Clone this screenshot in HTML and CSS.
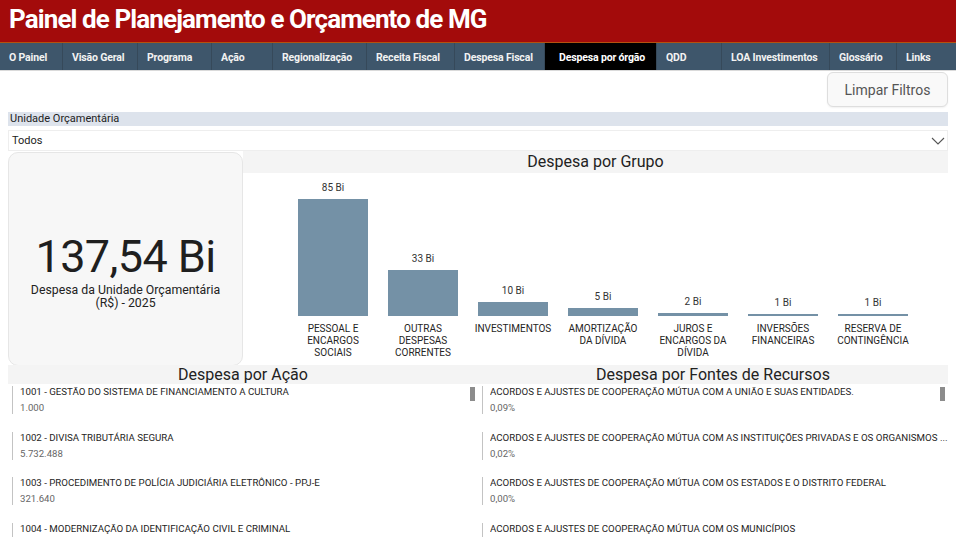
FILE: index.html
```html
<!DOCTYPE html>
<html lang="pt-BR">
<head>
<meta charset="utf-8">
<title>Painel de Planejamento e Orçamento de MG</title>
<link rel="stylesheet" href="styles.css">
</head>
<body>
<header class="topbar">
  <h1 class="title">Painel de Planejamento e Orçamento de MG</h1>
</header>
<nav class="nav">
  <a class="tab w63">O Painel</a>
  <a class="tab w75">Visão Geral</a>
  <a class="tab w74">Programa</a>
  <a class="tab w61">Ação</a>
  <a class="tab w94">Regionalização</a>
  <a class="tab w88">Receita Fiscal</a>
  <a class="tab w90">Despesa Fiscal</a>
  <a class="tab w112 active">Despesa por órgão</a>
  <a class="tab w65">QDD</a>
  <a class="tab w108">LOA Investimentos</a>
  <a class="tab w67">Glossário</a>
  <a class="tab w59 last">Links</a>
</nav>
<main class="main">
  <div class="toolbar">
    <button class="clear-btn">Limpar Filtros</button>
  </div>
  <section class="slicer">
    <div class="slicer-head">Unidade Orçamentária</div>
    <div class="slicer-box">
      <span>Todos</span>
      <svg class="chev" width="14" height="8" viewBox="0 0 14 8"><path d="M1 1 L7 7 L13 1" fill="none" stroke="#555" stroke-width="1.1"/></svg>
    </div>
  </section>
  <section class="row-top">
    <div class="card">
      <div class="card-value">137,54 Bi</div>
      <div class="card-label">Despesa da Unidade Orçamentária<br>(R$) - 2025</div>
    </div>
    <div class="chart">
      <div class="panel-title">Despesa por Grupo</div>
      <div class="plot">
        <div class="col"><div class="bar-area"><span class="val">85 Bi</span><div class="bar" style="height:117px"></div></div><div class="cat">PESSOAL E<br>ENCARGOS<br>SOCIAIS</div></div>
        <div class="col"><div class="bar-area"><span class="val">33 Bi</span><div class="bar" style="height:46px"></div></div><div class="cat">OUTRAS<br>DESPESAS<br>CORRENTES</div></div>
        <div class="col"><div class="bar-area"><span class="val">10 Bi</span><div class="bar" style="height:14px"></div></div><div class="cat">INVESTIMENTOS</div></div>
        <div class="col"><div class="bar-area"><span class="val">5 Bi</span><div class="bar" style="height:8px"></div></div><div class="cat">AMORTIZAÇÃO<br>DA DÍVIDA</div></div>
        <div class="col"><div class="bar-area"><span class="val">2 Bi</span><div class="bar" style="height:3px"></div></div><div class="cat">JUROS E<br>ENCARGOS DA<br>DÍVIDA</div></div>
        <div class="col"><div class="bar-area"><span class="val">1 Bi</span><div class="bar" style="height:2px"></div></div><div class="cat">INVERSÕES<br>FINANCEIRAS</div></div>
        <div class="col"><div class="bar-area"><span class="val">1 Bi</span><div class="bar" style="height:2px"></div></div><div class="cat">RESERVA DE<br>CONTINGÊNCIA</div></div>
      </div>
    </div>
  </section>
  <section class="row-bottom">
    <div class="list-panel">
      <div class="panel-title small">Despesa por Ação</div>
      <div class="list">
        <div class="item"><div class="item-title">1001 - GESTÃO DO SISTEMA DE FINANCIAMENTO A CULTURA</div><div class="item-val">1.000</div></div>
        <div class="item"><div class="item-title">1002 - DIVISA TRIBUTÁRIA SEGURA</div><div class="item-val">5.732.488</div></div>
        <div class="item"><div class="item-title">1003 - PROCEDIMENTO DE POLÍCIA JUDICIÁRIA ELETRÔNICO - PPJ-E</div><div class="item-val">321.640</div></div>
        <div class="item"><div class="item-title">1004 - MODERNIZAÇÃO DA IDENTIFICAÇÃO CIVIL E CRIMINAL</div><div class="item-val">&nbsp;</div></div>
        <div class="thumb"></div>
      </div>
    </div>
    <div class="list-panel">
      <div class="panel-title small">Despesa por Fontes de Recursos</div>
      <div class="list">
        <div class="item"><div class="item-title">ACORDOS E AJUSTES DE COOPERAÇÃO MÚTUA COM A UNIÃO E SUAS ENTIDADES.</div><div class="item-val">0,09%</div></div>
        <div class="item"><div class="item-title">ACORDOS E AJUSTES DE COOPERAÇÃO MÚTUA COM AS INSTITUIÇÕES PRIVADAS E OS ORGANISMOS ...</div><div class="item-val">0,02%</div></div>
        <div class="item"><div class="item-title">ACORDOS E AJUSTES DE COOPERAÇÃO MÚTUA COM OS ESTADOS E O DISTRITO FEDERAL</div><div class="item-val">0,00%</div></div>
        <div class="item"><div class="item-title">ACORDOS E AJUSTES DE COOPERAÇÃO MÚTUA COM OS MUNICÍPIOS</div><div class="item-val">&nbsp;</div></div>
        <div class="thumb"></div>
      </div>
    </div>
  </section>
</main>
</body>
</html>
```

FILE: styles.css
```css
* { box-sizing: border-box; }
html, body { margin: 0; padding: 0; }
body {
  width: 956px;
  height: 539px;
  overflow: hidden;
  background: #ffffff;
  font-family: Roboto, "Liberation Sans", sans-serif;
  color: #252423;
}

.topbar {
  height: 43px;
  background: #a30b0b;
  border-bottom: 1px solid #b4520f;
  display: flex;
  align-items: center;
  padding-left: 9px;
}
.title {
  margin: 0;
  font-size: 26px;
  font-weight: 700;
  letter-spacing: -0.9px;
  color: #ffffff;
  line-height: 1;
  padding-bottom: 4px;
}

.nav {
  display: flex;
  height: 28px;
  background: #3e566b;
  border-bottom: 1px solid #dadada;
}
.tab {
  display: flex;
  align-items: center;
  padding-left: 9px;
  padding-top: 1px;
  font-size: 10.5px;
  font-weight: 700;
  color: #f2f2f2;
  letter-spacing: -0.15px;
  border-right: 1px solid #36495a;
  white-space: nowrap;
}
.tab.last { border-right: none; }
.tab.active {
  background: #000000;
  color: #ffffff;
  padding-left: 14px;
}
.w59 { width: 59px; } .w61 { width: 61px; } .w63 { width: 63px; }
.w65 { width: 65px; } .w67 { width: 67px; } .w74 { width: 74px; }
.w75 { width: 75px; } .w88 { width: 88px; } .w90 { width: 90px; }
.w94 { width: 94px; } .w108 { width: 108px; } .w112 { width: 112px; }

.main { padding: 0 8px; }

.toolbar {
  display: flex;
  justify-content: flex-end;
  padding-top: 1px;
  height: 41px;
}
.clear-btn {
  width: 121px;
  height: 35px;
  border: 1px solid #dedede;
  border-radius: 6px;
  background: #f9f9f9;
  font-family: Roboto, "Liberation Sans", sans-serif;
  font-size: 14px;
  color: #555555;
  padding: 0;
  box-shadow: 0 1px 2px rgba(0,0,0,0.06);
}

.slicer-head {
  height: 14px;
  background: #dde3ec;
  font-size: 11px;
  line-height: 14px;
  padding-left: 2px;
  color: #222;
}
.slicer-box {
  margin-top: 4px;
  height: 21px;
  border: 1px solid #eeeeee;
  display: flex;
  align-items: center;
  justify-content: space-between;
  padding: 0 2px 0 3px;
  font-size: 11px;
  color: #222;
}

.row-top {
  display: flex;
  height: 214px;
}
.card {
  width: 235px;
  height: 214px;
  margin-top: 1px;
  border: 1px solid #e6e6e6;
  border-radius: 10px;
  background: #f7f7f7;
  display: flex;
  flex-direction: column;
  align-items: center;
  justify-content: center;
  padding-top: 23px;
}
.card-value {
  font-size: 45px;
  font-weight: 400;
  letter-spacing: -0.6px;
  line-height: 50px;
  color: #1f1f1f;
}
.card-label {
  font-size: 12.3px;
  line-height: 13px;
  text-align: center;
  color: #222;
  margin-top: 2px;
}

.chart {
  flex: 1;
  display: flex;
  flex-direction: column;
}
.panel-title {
  height: 22px;
  background: #f4f4f4;
  text-align: center;
  font-size: 16px;
  line-height: 22px;
  color: #222;
}
.panel-title.small {
  height: 19px;
  line-height: 19px;
}
.plot {
  display: grid;
  grid-template-columns: repeat(7, 90px);
  padding-left: 45px;
}
.col {
  display: flex;
  flex-direction: column;
  align-items: center;
}
.bar-area {
  height: 143px;
  display: flex;
  flex-direction: column;
  justify-content: flex-end;
  align-items: center;
}
.val {
  font-size: 10px;
  color: #333;
  line-height: 12px;
  margin-bottom: 5px;
}
.bar {
  width: 70px;
  background: #7491a6;
}
.cat {
  margin-top: 7px;
  font-size: 10px;
  line-height: 12px;
  text-align: center;
  color: #252423;
  white-space: nowrap;
}

.row-bottom {
  display: grid;
  grid-template-columns: 470px 470px;
  height: 172px;
  overflow: hidden;
}
.list-panel {
  display: flex;
  flex-direction: column;
  overflow: hidden;
}
.list {
  position: relative;
  flex: 1;
  overflow: hidden;
  padding: 2px 0 0 4px;
}
.item {
  border-left: 1px solid #c3c3c3;
  padding-left: 7px;
  margin-bottom: 17.5px;
  height: 28px;
}
.item-title {
  font-size: 9.7px;
  line-height: 12px;
  color: #252423;
  white-space: nowrap;
  overflow: hidden;
}
.item-val {
  margin-top: 4px;
  font-size: 9.6px;
  line-height: 12px;
  color: #666;
}
.thumb {
  position: absolute;
  top: 3px;
  right: 3px;
  width: 5px;
  height: 14px;
  background: #8c8c8c;
}
```
